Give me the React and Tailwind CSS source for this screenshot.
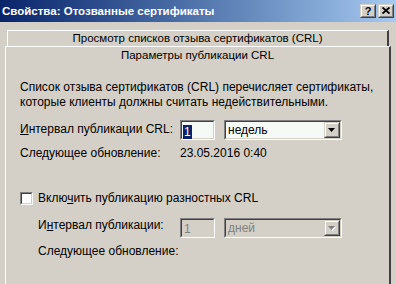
const face = { fontFamily: '"Liberation Sans", Arial, sans-serif' };

const Sunken = ({ className = "", inner = "", children }) => (
  <div className={`border border-t-[#808080] border-l-[#808080] border-r-white border-b-white ${className}`}>
    <div className={`h-full border border-t-[#404040] border-l-[#404040] border-r-[#d4d0c8] border-b-[#d4d0c8] ${inner}`}>
      {children}
    </div>
  </div>
);

const Raised = ({ className = "", children }) => (
  <div className={`border border-t-[#d4d0c8] border-l-[#d4d0c8] border-r-[#404040] border-b-[#404040] ${className}`}>
    <div className="h-full flex items-center justify-center bg-[#d4d0c8] border border-t-white border-l-white border-r-[#808080] border-b-[#808080]">
      {children}
    </div>
  </div>
);

const Arrow = ({ disabled }) => (
  <svg width="8" height="5" viewBox="0 0 8 5">
    {disabled && <path d="M1 1h7L4.5 5z" fill="#ffffff" />}
    <path d="M0 0h7L3.5 4z" fill={disabled ? "#808080" : "#000000"} />
  </svg>
);

const Combo = ({ value, disabled }) => (
  <Sunken className="w-[118px] h-[20px]" inner={disabled ? "bg-[#d4d0c8] flex" : "bg-[#f6faf6] flex"}>
    <span className={`flex-1 pl-[2px] leading-[16px] ${disabled ? "text-[#808080]" : "text-black"}`}>{value}</span>
    <Raised className="w-[16px] h-[16px]">
      <Arrow disabled={disabled} />
    </Raised>
  </Sunken>
);

export default function App() {
  return (
    <div className="w-[396px] h-[284px] overflow-hidden bg-[#d4d0c8] text-[12px] text-black" style={face}>
      {/* title bar */}
      <div className="h-[22px] flex items-center justify-between pl-[2px] pr-[2px] bg-gradient-to-r from-[#0a246a] to-[#a6caf0]">
        <span className="text-white font-bold text-[11.5px] leading-[14px] -mt-[1px]">Свойства: Отозванные сертификаты</span>
        <div className="flex gap-[2px] -mt-[1px]">
          <Raised className="w-[16px] h-[14px]">
            <span className="font-bold text-[11px] leading-[10px]">?</span>
          </Raised>
          <Raised className="w-[16px] h-[14px]">
            <svg width="8" height="7" viewBox="0 0 8 7">
              <path d="M0.5 0.5L7.5 6.5M7.5 0.5L0.5 6.5" stroke="#000" strokeWidth="1.8" />
            </svg>
          </Raised>
        </div>
      </div>

      <div className="pt-[8px]">
        {/* back tab row */}
        <div className="mx-[7px] h-[16px] border-t border-l border-t-white border-l-white border-r-2 border-r-[#404040] text-center text-[11.5px] leading-[14px]">
          Просмотр списков отзыва сертификатов (CRL)
        </div>

        {/* page */}
        <div className="mx-[5px] h-[260px] border-t border-l border-t-white border-l-white border-r-2 border-r-[#404040]">
          <div className="text-center text-[11.5px] leading-[15px] mt-[1px]">Параметры публикации CRL</div>

          <div className="pl-[14px]">
            <p className="mt-[17px] leading-[15px]">
              Список отзыва сертификатов (CRL) перечисляет сертификаты,
              <br />
              которые клиенты должны считать недействительными.
            </p>

            <div className="flex mt-[10px] h-[20px]">
              <span className="w-[160px] leading-[15px] mt-[2px]">
                <span className="underline">И</span>нтервал публикации CRL:
              </span>
              <Sunken className="w-[35px] h-[20px]" inner="bg-[#f6faf6] pl-[1px] pt-[1px]">
                <span className="bg-[#0a246a] text-white leading-[14px] inline-block px-[1px]">1</span>
              </Sunken>
              <div className="ml-[9px]">
                <Combo value="недель" />
              </div>
            </div>

            <div className="flex mt-[6px] leading-[15px]">
              <span className="w-[160px]">Следующее обновление:</span>
              <span>23.05.2016 0:40</span>
            </div>

            <div className="flex items-center mt-[30px] h-[15px]">
              <Sunken className="w-[13px] h-[13px]" inner="bg-white" />
              <span className="ml-[5px] leading-[15px]">
                Вклю<span className="underline">ч</span>ить публикацию разностных CRL
              </span>
            </div>

            <div className="flex mt-[11px] pl-[18px]">
              <span className="w-[142px] leading-[15px] mt-[1px]">
                И<span className="underline">н</span>тервал публикации:
              </span>
              <Sunken className="w-[35px] h-[20px] mt-[1px]" inner="bg-[#d4d0c8] pl-[2px]">
                <span className="text-[#808080] leading-[16px]">1</span>
              </Sunken>
              <div className="ml-[9px] mt-[1px]">
                <Combo value="дней" disabled />
              </div>
            </div>

            <div className="mt-[6px] pl-[18px] leading-[15px]">Следующее обновление:</div>
          </div>
        </div>
      </div>
    </div>
  );
}
